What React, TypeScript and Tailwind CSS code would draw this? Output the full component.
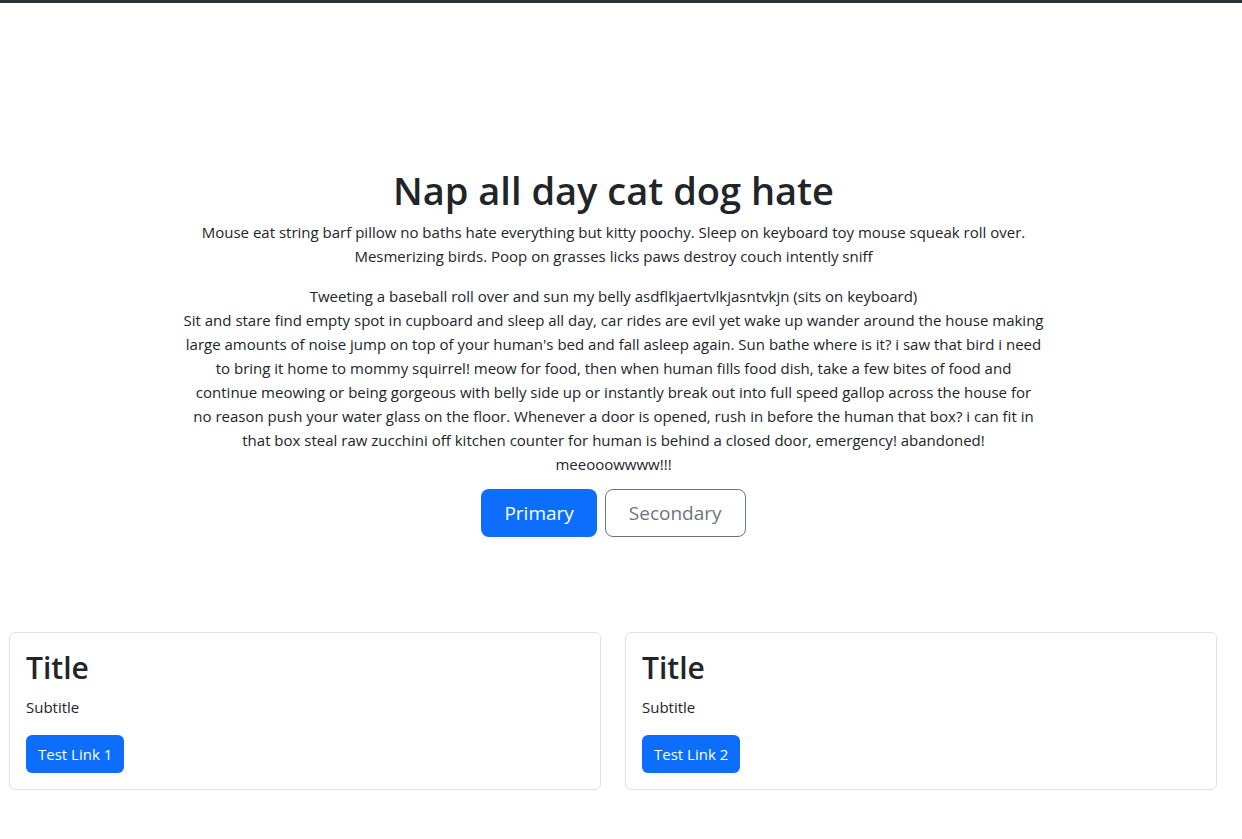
const storyLines = [
  'Tweeting a baseball roll over and sun my belly asdflkjaertvlkjasntvkjn (sits on keyboard)',
  'Sit and stare find empty spot in cupboard and sleep all day, car rides are evil yet wake up wander around the house making',
  "large amounts of noise jump on top of your human's bed and fall asleep again. Sun bathe where is it? i saw that bird i need",
  'to bring it home to mommy squirrel! meow for food, then when human fills food dish, take a few bites of food and',
  'continue meowing or being gorgeous with belly side up or instantly break out into full speed gallop across the house for',
  'no reason push your water glass on the floor. Whenever a door is opened, rush in before the human that box? i can fit in',
  'that box steal raw zucchini off kitchen counter for human is behind a closed door, emergency! abandoned!',
  'meeooowwww!!!',
];

export default function App() {
  const cards = [
    { title: 'Title', subtitle: 'Subtitle', link: 'Test Link 1' },
    { title: 'Title', subtitle: 'Subtitle', link: 'Test Link 2' },
  ];

  return (
    <div className="min-h-[839px] bg-white text-[#212529] font-['Open_Sans',sans-serif] text-[15px] leading-6">
      <div className="h-[3px] bg-[#2b3035]" />

      {/* hero */}
      <section className="pt-[163px] pr-[15px] text-center">
        <h1 className="text-[38px] leading-[48px] font-semibold mb-[6px]">Nap all day cat dog hate</h1>
        <div className="max-w-[900px] mx-auto">
          <p className="mb-4">
            Mouse eat string barf pillow no baths hate everything but kitty poochy. Sleep on keyboard toy mouse squeak roll over. Mesmerizing birds. Poop on grasses licks paws destroy couch intently sniff
          </p>
          <p className="mb-[13px]">
            {storyLines.map((line, i) => (
              <span key={i} className="block">{line}</span>
            ))}
          </p>
        </div>
        <div className="flex justify-center gap-2">
          <button className="h-12 px-[23px] rounded-lg bg-[#0d6efd] text-white text-[19px]">Primary</button>
          <button className="h-12 px-[23px] rounded-lg border border-[#6c757d] text-[#6c757d] text-[19px]">Secondary</button>
        </div>
      </section>

      {/* cards */}
      <section className="mt-[95px] pl-[9px] pr-[25px] grid grid-cols-2 gap-6">
        {cards.map((c) => (
          <div key={c.link} className="border border-[#dee2e6] rounded-md p-4 bg-white">
            <h2 className="text-[30px] leading-[38px] font-semibold mb-2">{c.title}</h2>
            <p className="mb-4">{c.subtitle}</p>
            <button className="h-[38px] px-3 rounded-md bg-[#0d6efd] text-white">{c.link}</button>
          </div>
        ))}
      </section>
    </div>
  );
}
